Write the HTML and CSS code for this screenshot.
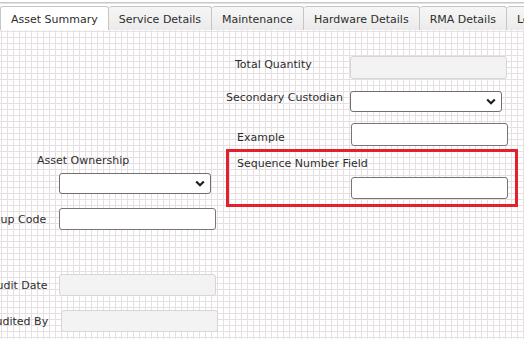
FILE: index.html
```html
<!DOCTYPE html>
<html lang="en">
<head>
<meta charset="utf-8">
<title>Asset Summary</title>
<link rel="stylesheet" href="styles.css">
</head>
<body>
<div class="tabstrip">
  <div class="topline"></div>
  <div class="tabs">
    <div class="tab active">Asset Summary</div>
    <div class="tab">Service Details</div>
    <div class="tab">Maintenance</div>
    <div class="tab">Hardware Details</div>
    <div class="tab">RMA Details</div>
    <div class="tab">Location</div>
  </div>
</div>
<div class="canvas">
  <div class="lbl w-total-l">Total Quantity</div>
  <div class="inp disabled w-total-i"></div>

  <div class="lbl w-sec-l">Secondary Custodian</div>
  <div class="sel w-sec-i"><svg class="chev" width="10" height="7" viewBox="0 0 10 7"><polyline points="1.2,1.5 5,5.2 8.8,1.5" fill="none" stroke="#1e1e1e" stroke-width="2.2"/></svg></div>

  <div class="lbl w-ex-l">Example</div>
  <div class="inp w-ex-i"></div>

  <div class="highlight w-seq">
    <div class="lbl-flow">Sequence Number Field</div>
    <div class="inp seq-inp"></div>
  </div>

  <div class="lbl w-own-l">Asset Ownership</div>
  <div class="sel w-own-i"><svg class="chev" width="10" height="7" viewBox="0 0 10 7"><polyline points="1.2,1.5 5,5.2 8.8,1.5" fill="none" stroke="#1e1e1e" stroke-width="2.2"/></svg></div>

  <div class="lbl w-grp-l">Group Code</div>
  <div class="inp w-grp-i"></div>

  <div class="lbl w-aud-l">Audit Date</div>
  <div class="inp disabled w-aud-i"></div>

  <div class="lbl w-by-l">Audited By</div>
  <div class="inp disabled w-by-i"></div>
</div>
</body>
</html>
```

FILE: styles.css
```css
html, body {
  margin: 0;
  padding: 0;
  background: #ffffff;
}
body {
  width: 524px;
  height: 339px;
  overflow: hidden;
  font-family: "DejaVu Sans", Verdana, sans-serif;
  font-size: 11px;
  color: #2e2e2e;
}
.tabstrip {
  padding-top: 2px;
  background: #ffffff;
}
.topline {
  height: 1px;
  background: #c9c9c9;
  border-bottom: 1px solid #e2e2e2;
}
.tabs {
  display: flex;
  margin-top: 2px;
  height: 24px;
  overflow: hidden;
  white-space: nowrap;
}
.tab {
  flex-shrink: 0;
  box-sizing: border-box;
  height: 24px;
  padding: 6px 10px 0 10px;
  line-height: 13px;
  border: 1px solid #c6c6c6;
  border-bottom: none;
  border-left: none;
  border-radius: 3px 3px 0 0;
  background: linear-gradient(#f6f6f6, #ebebeb);
  color: #2e2e2e;
}
.tab.active {
  background: #ffffff;
  border-left: 1px solid #c6c6c6;
}
.canvas {
  position: relative;
  height: 309px;
  overflow: hidden;
  background-color: #ffffff;
  background-image:
    linear-gradient(to right, #e6e0e3 1px, transparent 1px),
    linear-gradient(to bottom, #e6e0e3 1px, transparent 1px);
  background-size: 6px 6px;
  background-position: 1px 1px;
}
.lbl {
  position: absolute;
  line-height: 13px;
  white-space: nowrap;
  color: #2e2e2e;
}
.inp, .sel {
  position: absolute;
  box-sizing: border-box;
  background: #ffffff;
  border: 1px solid #767676;
  border-radius: 3px;
}
.inp {
  width: 157px;
  height: 23px;
}
.inp.disabled {
  background: #f3f3f3;
  border-color: #d6d6d6;
}
.sel {
  width: 152px;
  height: 21px;
  border-color: #6f6f6f;
  display: flex;
  align-items: center;
  justify-content: flex-end;
  padding-right: 5px;
}
.chev {
  display: block;
}

/* canvas widget positions */
.w-total-l { left: 235px; top: 28px; }
.w-total-i { left: 350px; top: 26px; }
.w-sec-l { left: 226px; top: 61px; }
.w-sec-i { left: 350px; top: 61px; }
.w-ex-l { left: 237px; top: 101px; }
.w-ex-i { left: 351px; top: 93px; }

.highlight {
  position: absolute;
  box-sizing: border-box;
  width: 292px;
  height: 58px;
  border: 3px solid #e3202b;
  padding: 5px 0 0 8px;
}
.w-seq { left: 226px; top: 119px; }
.lbl-flow {
  line-height: 13px;
  white-space: nowrap;
  color: #2e2e2e;
}
.seq-inp {
  position: static;
  margin: 7px 0 0 114px;
  height: 22px;
}

.w-own-l { left: 37px; top: 124px; }
.w-own-i { left: 59px; top: 143px; }
.w-grp-l { left: -19px; top: 183px; }
.w-grp-i { left: 59px; top: 178px; height: 22px; }
.w-aud-l { left: -11px; top: 249px; }
.w-aud-i { left: 59px; top: 244px; height: 22px; }
.w-by-l { left: -12px; top: 285px; }
.w-by-i { left: 61px; top: 280px; height: 22px; }
```
